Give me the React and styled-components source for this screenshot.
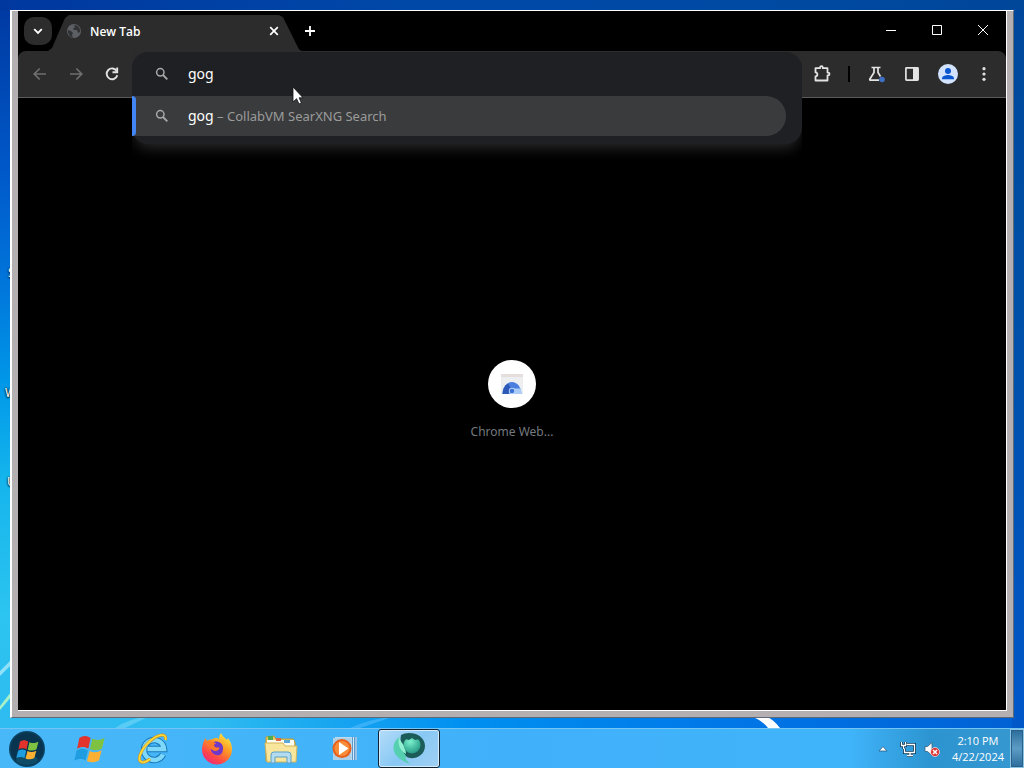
import React, { useState } from 'react';
import styled, { createGlobalStyle, css } from 'styled-components';

const GlobalStyle = createGlobalStyle`
  * {
    box-sizing: border-box;
  }

  body {
    margin: 0;
    font-family: "Noto Sans", "Open Sans", sans-serif;
    font-size: 13px;
  }

  button, input {
    font: inherit;
    color: inherit;
    margin: 0;
    padding: 0;
    border: 0;
    background: none;
  }
`;

/* Desktop */

const Desktop = styled.div`
  position: relative;
  display: flex;
  flex-direction: column;
  min-height: 100vh;
  overflow: hidden;
  background:
    linear-gradient(90deg, #0038a0 0%, #0048a8 40%, #004aa4 70%, #00479a 100%) 0 0 / 100% 11px no-repeat,
    linear-gradient(180deg, #00479a 0%, #0050a8 40%, #0058cc 100%) 100% 0 / 12px 100% no-repeat,
    linear-gradient(90deg, transparent 20%, #0090f0 45%, #0078e8 70%, #0060d4 100%),
    linear-gradient(180deg, #0038a0 0%, #0058c8 22%, #0078dc 38%, #0098e8 50%, #14b4ec 62%, #2cc4f0 80%, #30b8f0 100%);
`;

const LightStreaks = styled.svg`
  position: absolute;
  left: 0;
  bottom: 40px;
  width: 100%;
  height: 90px;
`;

const Shortcut = styled.span`
  position: absolute;
  left: ${props => props.$left}px;
  top: ${props => props.$top}px;
  font-size: 12px;
  line-height: 16px;
  color: #fff;
  text-shadow: 0 1px 2px #000, 0 0 2px #000;
`;

const Window = styled.main`
  position: relative;
  flex: 1;
  display: flex;
  margin: 10px;
  border: 1px solid #fff;
  border-left-width: 2px;
  border-right-color: #5f6a78;
  border-bottom-color: #5f6a78;
  background: #b4b0b2;
  padding: 0 6px 6px;
`;

const Client = styled.div`
  flex: 1;
  display: flex;
  flex-direction: column;
  min-width: 0;
  border: solid #fff;
  border-width: 0 1px 1px 0;
  background: #000;
`;

/* Tab strip */

const TabStrip = styled.header`
  display: flex;
  align-items: center;
  height: 40px;
  padding-left: 6px;
  color: #fff;
`;

const TabSearch = styled.button`
  display: grid;
  place-items: center;
  width: 28px;
  height: 28px;
  border-radius: 10px;
  background: #2c2c2c;
`;

const Tab = styled.div`
  display: flex;
  align-items: center;
  align-self: flex-end;
  width: 254px;
  height: 36px;
  margin-left: -4px;
  padding: 0 20px 4px 18px;
  gap: 8px;
  background: #2c2c2c;
  clip-path: polygon(0 100%, 4px 92%, 17px 8%, 21px 0, 231px 0, 235px 6%, 251px 96%, 100% 100%);
`;

const TabTitle = styled.span`
  flex: 1;
  padding-top: 2px;
  font-family: "Open Sans", sans-serif;
  font-size: 12px;
  font-weight: 600;
  line-height: 16px;
`;

const SmallButton = styled.button`
  display: grid;
  place-items: center;
  width: 16px;
  height: 16px;
`;

const CaptionButtons = styled.div`
  display: flex;
  align-self: stretch;
  margin-left: auto;
`;

const CaptionButton = styled.button`
  display: grid;
  place-items: center;
  width: 46px;
  height: 38px;
`;

/* Toolbar */

const Toolbar = styled.div`
  display: flex;
  align-items: center;
  height: 47px;
  padding: 0 4px;
  border-bottom: 1px solid #5a5a5a;
  border-radius: 8px 8px 0 0;
  background: #2c2c2c;
  color: #e3e3e3;
`;

const ToolButton = styled.button`
  position: relative;
  display: grid;
  place-items: center;
  width: 36px;
  height: 36px;

  &:disabled {
    color: #6e6e6e;
  }
`;

const Divider = styled.span`
  width: 2px;
  height: 16px;
  margin: 0 8px;
  background: #000;
`;

const Omnibox = styled.form`
  position: relative;
  flex: 1;
  align-self: stretch;
  margin: 0 2px;
`;

const Popup = styled.div`
  position: absolute;
  top: 1px;
  left: 0;
  right: 0;
  z-index: 2;
  padding-bottom: 8px;
  border-radius: 16px;
  background: #1f2023;
  box-shadow: 0 8px 14px -4px #2a2a2a;
  clip-path: inset(0 0 -24px 0);
`;

const rowLayout = css`
  display: flex;
  align-items: center;
  width: 100%;
  padding-left: 22px;
  gap: 18px;
  font-size: 13px;
  line-height: 20px;
  text-align: left;
`;

const QueryRow = styled.label`
  ${rowLayout}
  height: 44px;
  color: #fff;
`;

const QueryInput = styled.input`
  flex: 1;
  font-size: 14px;
  outline: none;
`;

const Suggestion = styled.button`
  ${rowLayout}
  position: relative;
  width: calc(100% - 16px);
  height: 40px;
  border-radius: 0 20px 20px 0;
  background: #3a3b3d;
  color: #9b9b9b;

  &::before {
    content: "";
    position: absolute;
    left: 0;
    top: 0;
    bottom: 0;
    width: 4px;
    border-radius: 0 4px 4px 0;
    background: #4285f4;
  }

  b {
    font-size: 14px;
    font-weight: 400;
    color: #fff;
  }
`;

/* New tab page */

const Page = styled.section`
  flex: 1;
  display: flex;
  align-items: center;
  justify-content: center;
  padding-bottom: 6px;
`;

const Tile = styled.a`
  display: flex;
  flex-direction: column;
  align-items: center;
  gap: 14px;
  width: 112px;
  color: #74797e;
  font-size: 12px;
  line-height: 20px;
  text-decoration: none;
`;

const TileIcon = styled.span`
  display: grid;
  place-items: center;
  width: 48px;
  height: 48px;
  border-radius: 50%;
  background: #fff;
`;

/* Taskbar */

const Taskbar = styled.footer`
  position: relative;
  display: flex;
  align-items: stretch;
  height: 40px;
  border-top: 1px solid #74c4f4;
  background: linear-gradient(90deg, #48b8f8 0%, #40b0fa 50%, #40b4fa 83%, #2c94d0 91%, #3898d0 100%);
`;

const StartButton = styled.button`
  display: grid;
  place-items: center;
  width: 54px;
`;

const TaskList = styled.nav`
  display: flex;
  flex: 1;
  gap: 2px;
  padding-left: 4px;
`;

const TaskButton = styled.button`
  display: grid;
  place-items: center;
  width: 62px;

  ${props => props.$active && css`
    border: 1px solid #123;
    border-radius: 3px;
    background: linear-gradient(135deg, #b4dcf8, #88c8f4 50%, #a0d0f4);
    box-shadow: inset 0 0 0 1px #d4ecfc;
  `}
`;

const Tray = styled.div`
  display: flex;
  align-items: center;
  gap: 8px;
  padding-right: 6px;
`;

const TrayToggle = styled.button`
  display: grid;
  place-items: center;
  width: 14px;
  padding-right: 4px;
`;

const Clock = styled.time`
  padding-left: 4px;
  color: #fff;
  font-family: "Open Sans", sans-serif;
  font-size: 11px;
  line-height: 16px;
  text-align: center;
`;

const ShowDesktop = styled.button`
  width: 14px;
  border: 1px solid #8cc4e4;
  background: linear-gradient(#2c6c9c, #5c9cc4 50%, #2c6c9c);
  box-shadow: inset 0 0 0 1px #28608c;
`;

const Pointer = styled.svg`
  position: absolute;
  left: 292px;
  top: 86px;
  z-index: 5;
  pointer-events: none;
`;

/* Icons */

const Magnifier = () => (
  <svg width="16" height="16" viewBox="0 0 16 16" fill="none" stroke="#a8a8a8" strokeWidth="1.5" aria-hidden="true">
    <circle cx="6.3" cy="6.3" r="3.7" />
    <path d="M9 9l4.3 4.3" strokeWidth="1.8" />
  </svg>
);

const Globe = () => (
  <svg width="16" height="16" viewBox="0 0 16 16" aria-hidden="true">
    <circle cx="8" cy="8" r="7" fill="#5c6064" />
    <path d="M2 7l3 1 2 2-1 2 1 2.5C4 14 1.500 11 2 7zM8 2l1 2-2 2 1 1 3 0 1 3 2-1C15 6 12 1.500 8 2z" fill="#303234" />
  </svg>
);

const Arrow = ({ flip }) => (
  <svg width="16" height="16" viewBox="0 0 16 16" fill="none" stroke="currentColor" strokeWidth="1.7" aria-hidden="true">
    <path d={flip ? 'M2 8h11.500M8.300 2.500L13.800 8l-5.500 5.500' : 'M14 8H2.500M7.700 2.500L2.200 8l5.500 5.500'} />
  </svg>
);

const Reload = () => (
  <svg width="16" height="16" viewBox="0 0 16 16" fill="none" stroke="currentColor" strokeWidth="1.9" aria-hidden="true">
    <path d="M12.800 5.200A5.400 5.400 0 1 0 13.300 9.200" />
    <path d="M13.200 1.500v4.800H8.500" />
  </svg>
);

const Puzzle = () => (
  <svg width="20" height="20" viewBox="0 0 20 20" fill="none" stroke="currentColor" strokeWidth="1.8" strokeLinejoin="round" aria-hidden="true">
    <path d="M3.500 4.200H8V3.600a1.400 1.400 0 0 1 2.800 0v.6h4.700v4.400h.6a1.400 1.400 0 0 1 0 2.800h-.6V16.500h-12v-4.100c2.500-.3 2.500-3.700 0-4z" />
  </svg>
);

const Flask = () => (
  <svg width="20" height="20" viewBox="0 0 20 20" fill="none" stroke="currentColor" strokeWidth="1.7" aria-hidden="true">
    <path d="M5.500 3.500h9M8 3.500v5L3.800 15.200q-.3 1 .8 1H13M12 3.500v5l2.500 4" />
    <circle cx="16" cy="15.500" r="2.800" fill="#3f6fc4" stroke="none" />
  </svg>
);

const SidePanel = () => (
  <svg width="16" height="16" viewBox="0 0 16 16" aria-hidden="true">
    <rect x="1.900" y="1.900" width="12.200" height="12.200" rx=".6" fill="none" stroke="currentColor" strokeWidth="1.700" />
    <path d="M9 2h5v12H9z" fill="currentColor" />
  </svg>
);

const Avatar = () => (
  <svg width="20" height="20" viewBox="0 0 20 20" aria-hidden="true">
    <circle cx="10" cy="10" r="10" fill="#d3e3fd" />
    <circle cx="10" cy="7" r="3" fill="#0b57d0" />
    <path d="M4 15.300v-1c0-2 4-3.200 6-3.200s6 1.200 6 3.200v1z" fill="#0b57d0" />
  </svg>
);

const Dots = () => (
  <svg width="16" height="16" viewBox="0 0 16 16" fill="currentColor" aria-hidden="true">
    <circle cx="8" cy="2.700" r="1.600" />
    <circle cx="8" cy="8" r="1.600" />
    <circle cx="8" cy="13.300" r="1.600" />
  </svg>
);

const WebStore = () => (
  <svg width="24" height="24" viewBox="0 0 24 24" aria-hidden="true">
    <path d="M1 2h22v20H1z" fill="#eceef0" />
    <path d="M1 2h22v3H1z" fill="#e4dfdd" />
    <path d="M2.500 22a9.500 12 0 0 1 19 0z" fill="#4a7fe0" />
    <path d="M2.500 22a9.500 12 0 0 1 5.500-10.500l3 5-3 5.500z" fill="#2d59b8" />
    <path d="M14 16.500h6.500a9 9 0 0 1 1 5.500H14z" fill="#a9cdf8" />
    <circle cx="12" cy="19" r="3.200" fill="#b9d4fa" />
    <circle cx="12" cy="19" r="2.300" fill="#3b72d8" />
  </svg>
);

const Flag = () => (
  <>
    <path d="M3 4.500C6 2 10 2 13 4.500L11 14C8 12 4.500 12 1 14z" fill="#e2332c" />
    <path d="M14.500 5.200c4 1.600 7 1.300 11-.7l-2.300 9.300c-3.500 2-7 2-10.700.5z" fill="#7fc241" />
    <path d="M.7 15.500c3.500-2 6.500-2 10-.1L8.500 24.500c-3.500-2-6.500-1.700-10 0z" fill="#1f9de0" />
    <path d="M12.200 16c3.500 1.700 7 1.500 10.700-.5l-2.400 9c-3.700 2-7 2-10.700.4z" fill="#fbb033" />
  </>
);

const StartOrb = () => (
  <svg width="36" height="36" viewBox="0 0 36 36" aria-hidden="true">
    <circle cx="18" cy="18" r="18" fill="#0d4464" />
    <circle cx="18" cy="18" r="16.500" fill="#083450" />
    <ellipse cx="18" cy="29" rx="11" ry="5" fill="#0e4c68" />
    <g transform="translate(8.500 7) scale(.82)"><Flag /></g>
  </svg>
);

const WindowsFlag = () => (
  <svg width="32" height="32" viewBox="0 0 32 32" aria-hidden="true">
    <g transform="translate(3 0) scale(1.120)"><Flag /></g>
  </svg>
);

const Explorer = () => (
  <svg width="32" height="32" viewBox="0 0 32 32" fill="none" aria-hidden="true">
    <path d="M26 21.500a10 10 0 1 1 1-5.500H10.500" stroke="#1878b8" strokeWidth="6.500" />
    <path d="M26 21.500a10 10 0 1 1 1-5.500H10.500" stroke="#7ed8fa" strokeWidth="4.500" />
    <path d="M28.500 7C30-1 20 1.500 12 9 4 16.500-.5 27 4.500 29c2.500 1 6-1 8.500-3" stroke="#c8921c" strokeWidth="3" />
    <path d="M28.500 7C30-1 20 1.500 12 9 4 16.500-.5 27 4.500 29c2.500 1 6-1 8.500-3" stroke="#fbd83c" strokeWidth="1.800" />
  </svg>
);

const Firefox = () => (
  <svg width="32" height="32" viewBox="0 0 32 32" aria-hidden="true">
    <defs>
      <linearGradient id="fox" x1=".85" y1="0" x2=".2" y2="1">
        <stop offset="0" stopColor="#fff044" />
        <stop offset=".4" stopColor="#ff9a24" />
        <stop offset=".75" stopColor="#ff4548" />
        <stop offset="1" stopColor="#e82888" />
      </linearGradient>
    </defs>
    <path d="M20 0c1 3 4 5 6 7l1-2c3 4 4 8 4 11a15 15 0 0 1-30 1C1 13 2 9 4.500 5L6 8c2-1.500 3-1.700 5-1.500C14 4 17 5 18 6c0-2 .5-4 2-6z" fill="url(#fox)" />
    <path d="M11 10c4-3 11-1 11 5s-3 8-7 7-6-5-5-8l4 0z" fill="#7038c8" />
    <path d="M5 8c4 0 8 0 10 3-2 0-3 1.500-1.500 3 3 1 5 0 5 1-1 3-4 4-7 2-2-1-4-4-3-6z" fill="#ff7a28" />
  </svg>
);

const Folder = () => (
  <svg width="34" height="32" viewBox="0 0 34 32" aria-hidden="true">
    <path d="M2 4l8-1 2 3h17l2 3v19H2z" fill="#eccb62" stroke="#bf9a38" />
    <path d="M3 7h27v7H3z" fill="#fcfcf0" />
    <path d="M4 3h5v4H4z" fill="#4cae50" />
    <path d="M12 5h5v3h-5z" fill="#d86848" />
    <path d="M20 7h6v3h-6z" fill="#58a8d8" />
    <path d="M1 10h18l2 3h12l-1 16H3z" fill="#f8e69c" stroke="#d4b458" />
    <path d="M7 30V22q0-3 3-3h14q3 0 3 3v8h-4v-6H11v6z" fill="#b4dcf0" stroke="#5ca0c4" />
  </svg>
);

const MediaPlayer = () => (
  <svg width="32" height="32" viewBox="0 0 32 32" aria-hidden="true">
    <path d="M8 4h20v23H8z" fill="#5c98cc" />
    <path d="M6 4h17v23H6z" fill="#bcdcf0" />
    <path d="M24.500 4v23M27 4v23" stroke="#d8ecf8" />
    <path d="M4 5h18v22H4z" fill="#acd0e8" />
    <circle cx="13" cy="15.500" r="9.500" fill="#e8601c" />
    <circle cx="13" cy="15.500" r="7.500" fill="#f88c38" />
    <path d="M10 9l9.500 6.500L10 22z" fill="#fff" />
  </svg>
);

const BrowserOrb = () => (
  <svg width="36" height="34" viewBox="0 0 36 34" aria-hidden="true">
    <defs>
      <radialGradient id="orb" cx=".4" cy=".3" r=".7">
        <stop offset="0" stopColor="#7cf0cc" />
        <stop offset="1" stopColor="#289c88" />
      </radialGradient>
    </defs>
    <path d="M10 3C18-2 34 2 34 14c0 9-9 13-15 12-7-1-11-12-9-23z" fill="#1c5c58" />
    <path d="M8 5C-1 13 0 25 19 32c-4-4-5-5-4-8-3-4-5-10-7-19z" fill="#54cfb0" />
    <path d="M8 5c1 5 7 8 7 17-5-3-9-9-7-17z" fill="#90f0d0" />
    <circle cx="21" cy="13" r="8.500" fill="url(#orb)" />
    <path d="M11 6q5-4 10-2 5 0 8 3l-5 1-3-2-3 2-4-1z" fill="#1c5c58" />
  </svg>
);

const Network = () => (
  <svg width="16" height="16" viewBox="0 0 16 16" fill="none" aria-hidden="true">
    <path d="M6 3.500h8.500v8H4.500v-4M7 14.500h6M10 12v2" stroke="#0c3858" strokeWidth="3" />
    <path d="M1.500 1v3.500h4V1M3.500 4.500V8" stroke="#0c3858" strokeWidth="3" />
    <path d="M6.500 3.500h8v8H4.500v-4M7 14.500h6M10 12v2M1.500 1v3.500h4V1M3.500 4.500V8" stroke="#fff" strokeWidth="1.300" />
  </svg>
);

const Muted = () => (
  <svg width="16" height="16" viewBox="0 0 16 16" aria-hidden="true">
    <path d="M1 5.500h2.500L8 1.500v13L3.500 10.500H1z" fill="#fff" stroke="#34607c" strokeWidth=".8" />
    <circle cx="11" cy="11" r="4.500" fill="#dc3434" stroke="#fff" strokeWidth=".6" />
    <path d="M9 9l4 4M13 9l-4 4" stroke="#fff" strokeWidth="1.500" />
  </svg>
);

const tasks = [
  { name: 'Windows', icon: <WindowsFlag /> },
  { name: 'Internet Explorer', icon: <Explorer /> },
  { name: 'Firefox', icon: <Firefox /> },
  { name: 'Windows Explorer', icon: <Folder /> },
  { name: 'Media Player', icon: <MediaPlayer /> },
  { name: 'New Tab', icon: <BrowserOrb />, active: true },
];

const AddressBar = () => {
  const [query, setQuery] = useState('gog');

  return (
    <Omnibox role="search" onSubmit={event => event.preventDefault()}>
      <Popup>
        <QueryRow>
          <Magnifier />
          <QueryInput
            type="text"
            aria-label="Search or type a URL"
            value={query}
            onChange={event => setQuery(event.target.value)}
          />
        </QueryRow>
        <Suggestion type="submit">
          <Magnifier />
          <span><b>{query}</b> – CollabVM SearXNG Search</span>
        </Suggestion>
      </Popup>
    </Omnibox>
  );
};

const Browser = () => (
  <Client>
    <TabStrip>
      <TabSearch type="button" aria-label="Search tabs">
        <svg width="12" height="12" viewBox="0 0 12 12" fill="none" stroke="currentColor" strokeWidth="1.800">
          <path d="M2.200 4.200L6 8l3.800-3.800" />
        </svg>
      </TabSearch>
      <Tab>
        <Globe />
        <TabTitle>New Tab</TabTitle>
        <SmallButton type="button" aria-label="Close tab">
          <svg width="10" height="10" viewBox="0 0 10 10" stroke="currentColor" strokeWidth="1.700">
            <path d="M1.200 1.200l7.600 7.600M8.800 1.200L1.200 8.800" />
          </svg>
        </SmallButton>
      </Tab>
      <SmallButton type="button" aria-label="New tab">
        <svg width="12" height="12" viewBox="0 0 12 12" stroke="currentColor" strokeWidth="1.800">
          <path d="M6 1v10M1 6h10" />
        </svg>
      </SmallButton>
      <CaptionButtons>
        <CaptionButton type="button" aria-label="Minimize">
          <svg width="10" height="10" stroke="currentColor"><path d="M0 5.500h10" /></svg>
        </CaptionButton>
        <CaptionButton type="button" aria-label="Maximize">
          <svg width="10" height="10" fill="none" stroke="currentColor"><path d="M.5.5h9v9h-9z" /></svg>
        </CaptionButton>
        <CaptionButton type="button" aria-label="Close">
          <svg width="10" height="10" stroke="currentColor"><path d="M0 0l10 10M10 0L0 10" /></svg>
        </CaptionButton>
      </CaptionButtons>
    </TabStrip>
    <Toolbar>
      <ToolButton type="button" aria-label="Back" disabled><Arrow /></ToolButton>
      <ToolButton type="button" aria-label="Forward" disabled><Arrow flip /></ToolButton>
      <ToolButton type="button" aria-label="Reload"><Reload /></ToolButton>
      <AddressBar />
      <ToolButton type="button" aria-label="Extensions"><Puzzle /></ToolButton>
      <Divider />
      <ToolButton type="button" aria-label="Experiments"><Flask /></ToolButton>
      <ToolButton type="button" aria-label="Side panel"><SidePanel /></ToolButton>
      <ToolButton type="button" aria-label="Profile"><Avatar /></ToolButton>
      <ToolButton type="button" aria-label="Menu"><Dots /></ToolButton>
    </Toolbar>
    <Page>
      <Tile href="#webstore">
        <TileIcon><WebStore /></TileIcon>
        Chrome Web...
      </Tile>
    </Page>
  </Client>
);

export default function App() {
  return (
    <Desktop>
      <GlobalStyle />
      <LightStreaks viewBox="0 0 1024 90" preserveAspectRatio="none" aria-hidden="true">
        <path d="M0 33L11 22v5L0 38z" fill="#90e0f8" />
        <path d="M0 68L11 54v5L0 72z" fill="#a8f0c8" />
        <path d="M115 90q15-10 35-12l-25 12z" fill="#58ccf4" />
        <path d="M350 90q20-9 45-12l-35 12z" fill="#38b0f8" />
        <path d="M750 78q12 4 18 12h12q-6-8-14-12z" fill="#fff" />
      </LightStreaks>
      <Shortcut $left={8} $top={265}>S</Shortcut>
      <Shortcut $left={5} $top={385}>W</Shortcut>
      <Shortcut $left={7} $top={474}>U</Shortcut>
      <Window>
        <Browser />
      </Window>
      <Taskbar>
        <StartButton type="button" aria-label="Start"><StartOrb /></StartButton>
        <TaskList>
          {tasks.map(task => (
            <TaskButton type="button" key={task.name} aria-label={task.name} $active={task.active}>
              {task.icon}
            </TaskButton>
          ))}
        </TaskList>
        <Tray>
          <TrayToggle type="button" aria-label="Show hidden icons">
            <svg width="10" height="8" viewBox="0 0 10 8" aria-hidden="true">
              <path d="M5 1.500L9 6H1z" fill="#fff" stroke="#245c80" strokeWidth=".8" />
            </svg>
          </TrayToggle>
          <Network />
          <Muted />
          <Clock>2:10 PM<br />4/22/2024</Clock>
        </Tray>
        <ShowDesktop type="button" aria-label="Show desktop" />
      </Taskbar>
      <Pointer width="14" height="20" viewBox="0 0 14 20" aria-hidden="true">
        <path d="M1 1v15l3.600-3.300L7 18l2.400-1-2.300-5.200H11z" fill="#fff" stroke="#111" strokeWidth=".8" />
      </Pointer>
    </Desktop>
  );
}
